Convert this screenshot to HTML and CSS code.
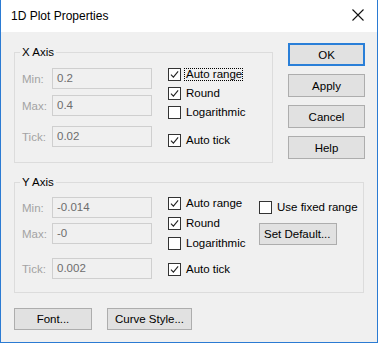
FILE: index.html
```html
<!DOCTYPE html>
<html>
<head>
    <title>1D Plot Properties</title>
    <meta charset="UTF-8">
    <link rel="stylesheet" href="styles.css">
</head>
<body>
<div class="window">
    <div class="titlebar">
        <span class="title">1D Plot Properties</span>
        <svg class="close" width="12" height="12" viewBox="0 0 12 12"><path d="M0.5 0.5 L11.5 11.5 M11.5 0.5 L0.5 11.5" stroke="#111" stroke-width="1.1" fill="none"/></svg>
    </div>
    <div class="client">
        <div class="top-row">
            <fieldset class="group group-x">
                <legend>X Axis</legend>
                <div class="group-body">
                    <div class="fields">
                        <div class="field"><span class="field-label">Min:</span><div class="textbox">0.2</div></div>
                        <div class="field"><span class="field-label">Max:</span><div class="textbox">0.4</div></div>
                        <div class="field field-tick"><span class="field-label">Tick:</span><div class="textbox">0.02</div></div>
                    </div>
                    <div class="checks">
                        <div class="check"><span class="box"><svg viewBox="0 0 13 13"><path d="M2.3 6.6 L5.2 9.6 L10.8 2.8"/></svg></span><span class="check-label focused">Auto range</span></div>
                        <div class="check"><span class="box"><svg viewBox="0 0 13 13"><path d="M2.3 6.6 L5.2 9.6 L10.8 2.8"/></svg></span><span class="check-label">Round</span></div>
                        <div class="check"><span class="box"></span><span class="check-label">Logarithmic</span></div>
                        <div class="check check-tick"><span class="box"><svg viewBox="0 0 13 13"><path d="M2.3 6.6 L5.2 9.6 L10.8 2.8"/></svg></span><span class="check-label">Auto tick</span></div>
                    </div>
                </div>
            </fieldset>
            <div class="side-buttons">
                <button class="btn btn-default">OK</button>
                <button class="btn">Apply</button>
                <button class="btn">Cancel</button>
                <button class="btn">Help</button>
            </div>
        </div>
        <fieldset class="group group-y">
            <legend>Y Axis</legend>
            <div class="group-body">
                <div class="fields">
                    <div class="field"><span class="field-label">Min:</span><div class="textbox">-0.014</div></div>
                    <div class="field"><span class="field-label">Max:</span><div class="textbox">-0</div></div>
                    <div class="field field-tick"><span class="field-label">Tick:</span><div class="textbox">0.002</div></div>
                </div>
                <div class="checks">
                    <div class="check"><span class="box"><svg viewBox="0 0 13 13"><path d="M2.3 6.6 L5.2 9.6 L10.8 2.8"/></svg></span><span class="check-label">Auto range</span></div>
                    <div class="check"><span class="box"><svg viewBox="0 0 13 13"><path d="M2.3 6.6 L5.2 9.6 L10.8 2.8"/></svg></span><span class="check-label">Round</span></div>
                    <div class="check"><span class="box"></span><span class="check-label">Logarithmic</span></div>
                    <div class="check check-tick"><span class="box"><svg viewBox="0 0 13 13"><path d="M2.3 6.6 L5.2 9.6 L10.8 2.8"/></svg></span><span class="check-label">Auto tick</span></div>
                </div>
                <div class="extra">
                    <div class="check"><span class="box"></span><span class="check-label">Use fixed range</span></div>
                    <button class="btn btn-set">Set Default...</button>
                </div>
            </div>
        </fieldset>
        <div class="bottom-buttons">
            <button class="btn btn-font">Font...</button>
            <button class="btn btn-curve">Curve Style...</button>
        </div>
    </div>
</div>
</body>
</html>
```

FILE: styles.css
```css
body, html {
    margin: 0;
    padding: 0;
    background: #ffffff;
}

body {
    font-family: "Liberation Sans", Arial, sans-serif;
    font-size: 11.5px;
    color: #000;
}

.window {
    width: 378px;
    height: 343px;
    box-sizing: border-box;
    border: 1px solid #2b7bd3;
    border-top: none;
    display: flex;
    flex-direction: column;
    background: #f0f0f0;
}

.titlebar {
    height: 32px;
    flex: none;
    background: #ffffff;
    display: flex;
    align-items: center;
    padding: 0 13px 0 10px;
}

.title {
    font-size: 12px;
    flex: 1;
    padding-bottom: 1px;
}

.close {
    display: block;
    margin-bottom: 2px;
}

.client {
    flex: 1;
    padding: 11px 0 0 13px;
}

.top-row {
    display: flex;
    align-items: flex-start;
}

/* group boxes */
.group {
    margin: 0;
    padding: 0;
    min-inline-size: 0;
    box-sizing: border-box;
    border: 1px solid #dcdcdc;
    height: 118px;
}

.group legend {
    font-size: 11.5px;
    line-height: 14px;
    padding: 0 2px;
    margin-left: 5px;
}

.group-x {
    margin-top: 2px;
    width: 259px;
}

.group-y {
    margin-top: 12px;
    width: 350px;
}

.group-body {
    display: flex;
    align-items: flex-start;
    padding-left: 7px;
}

.group-x .group-body {
    padding-top: 9px;
}

.group-y .group-body {
    padding-top: 8px;
}

/* edit fields */
.fields {
    width: 130px;
    flex: none;
}

.field {
    display: flex;
    align-items: center;
}

.group-x .field + .field {
    margin-top: 6px;
}

.group-x .field-tick {
    margin-top: 10px !important;
}

.group-y .field + .field {
    margin-top: 5px;
}

.group-y .field-tick {
    margin-top: 14px !important;
}

.field-label {
    width: 30px;
    color: #a3a3a3;
}

.textbox {
    width: 100px;
    height: 21px;
    box-sizing: border-box;
    border: 1px solid #cfcfcf;
    background: #f0f0f0;
    color: #6d6d6d;
    padding-left: 4px;
    line-height: 19px;
}

/* checkboxes */
.checks {
    margin-left: 16px;
    width: 91px;
    flex: none;
}

.check {
    display: flex;
    align-items: center;
    height: 13px;
}

.group-x .check + .check {
    margin-top: 6px;
}

.group-x .check-tick {
    margin-top: 15px !important;
}

.group-y .check + .check {
    margin-top: 7px;
}

.group-y .check-tick {
    margin-top: 13px !important;
}

.box {
    width: 13px;
    height: 13px;
    box-sizing: border-box;
    border: 1px solid #333333;
    background: #ffffff;
    flex: none;
    display: flex;
}

.box svg {
    width: 11px;
    height: 11px;
}

.box path {
    fill: none;
    stroke: #222;
    stroke-width: 1.3;
}

.check-label {
    margin-left: 4px;
    line-height: 13px;
    padding: 0 1px;
}

.check-label.focused {
    outline: 1px dotted #000;
    outline-offset: -1px;
    margin-left: 3px;
    padding: 0 1px 0 2px;
}

.extra {
    padding-top: 4px;
}

/* buttons */
.btn {
    font-family: "Liberation Sans", Arial, sans-serif;
    font-size: 11.5px;
    color: #000;
    background: #e1e1e1;
    border: 1px solid #adadad;
    box-sizing: border-box;
    padding: 0;
    margin: 0;
    display: block;
}

.side-buttons {
    margin-left: 15px;
    display: flex;
    flex-direction: column;
    gap: 8px;
}

.side-buttons .btn {
    width: 77px;
    height: 23px;
}

.btn-default {
    border: 2px solid #2a7fd8;
}

.btn-set {
    margin-top: 9px;
    width: 78px;
    height: 22px;
    text-align: left;
    padding-left: 4px;
}

.bottom-buttons {
    display: flex;
    gap: 15px;
    margin-top: 15px;
}

.bottom-buttons .btn {
    height: 22px;
}

.btn-font {
    width: 78px;
}

.btn-curve {
    width: 85px;
}
```
